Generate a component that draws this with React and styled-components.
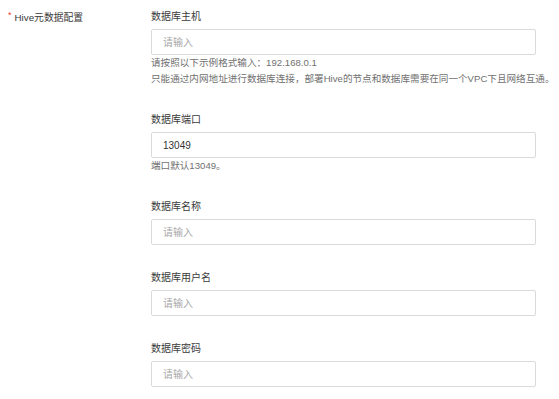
import React from "react";
import styled, { createGlobalStyle } from "styled-components";

const GlobalStyle = createGlobalStyle`
  html, body {
    margin: 0;
    padding: 0;
    background: #fff;
  }
  body {
    font-family: "Liberation Sans", "Noto Sans CJK SC", sans-serif;
    font-size: 10px;
    color: #333;
  }
`;

// 整体布局：左侧标题列 + 右侧表单列
const Page = styled.div`
  display: grid;
  grid-template-columns: 151px 385px;
  padding-top: 5px;
`;

const SectionTitle = styled.div`
  display: flex;
  align-items: center;
  height: 24px;
  padding-left: 8px;
  color: #3a3a3a;
  font-size: 9.8px;
`;

const Required = styled.span`
  color: #f04134;
  font-size: 9px;
  margin-right: 3px;
  position: relative;
  top: -2px;
`;

const Form = styled.div`
  display: flex;
  flex-direction: column;
  gap: 21px;
`;

const Field = styled.div`
  display: flex;
  flex-direction: column;
`;

const Label = styled.div`
  height: 24px;
  line-height: 24px;
  color: #3a3a3a;
`;

const Input = styled.input`
  box-sizing: border-box;
  width: 100%;
  height: 26px;
  margin: 0;
  padding: 0 11px;
  border: 1px solid #dadada;
  border-radius: 2px;
  font-family: inherit;
  font-size: 10px;
  color: #333;
  outline: none;
  &::placeholder {
    color: #a8a8a8;
  }
`;

const Help = styled.div`
  line-height: 16px;
  font-size: 9.6px;
  color: #707070;
  white-space: nowrap;
`;

const fields = [
  {
    label: "数据库主机",
    help: [
      "请按照以下示例格式输入：192.168.0.1",
      "只能通过内网地址进行数据库连接，部署Hive的节点和数据库需要在同一个VPC下且网络互通。",
    ],
  },
  { label: "数据库端口", value: "13049", help: ["端口默认13049。"] },
  { label: "数据库名称" },
  { label: "数据库用户名" },
  { label: "数据库密码" },
];

const App = () => {
  return (
    <>
      <GlobalStyle />
      <Page>
        <div>
          <SectionTitle>
            <Required>*</Required>
            Hive元数据配置
          </SectionTitle>
        </div>
        <Form>
          {fields.map((f) => (
            <Field key={f.label}>
              <Label>{f.label}</Label>
              <Input placeholder="请输入" defaultValue={f.value} />
              {f.help &&
                f.help.map((line) => <Help key={line}>{line}</Help>)}
            </Field>
          ))}
        </Form>
      </Page>
    </>
  );
};

export default App;
